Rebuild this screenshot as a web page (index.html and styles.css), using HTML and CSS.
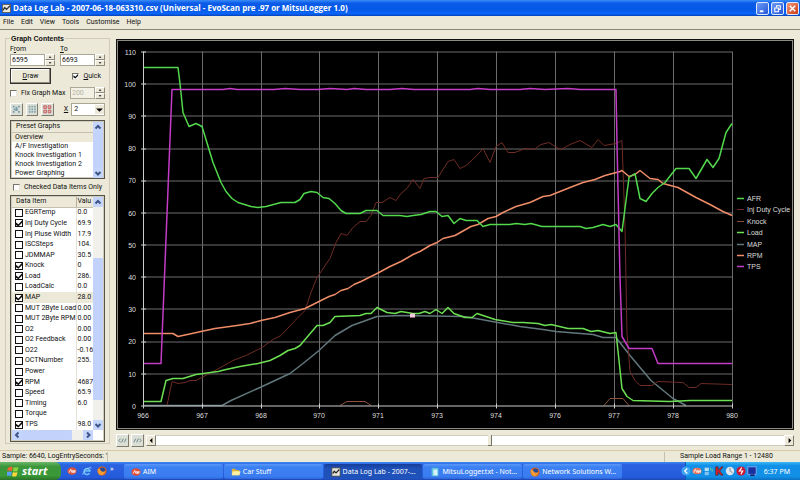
FILE: index.html
```
<!DOCTYPE html>
<html lang="en">
<head>
    <meta charset="UTF-8">
    <meta name="viewport" content="width=device-width, initial-scale=1.0">
    <title>Data Log Lab</title>
    <link rel="stylesheet" href="styles.css">
</head>
<body>
    <header class="titlebar">
        <svg class="app-icon" viewBox="0 0 10 10"><rect width="10" height="10" fill="#555"/><rect x="1" y="1" width="8" height="8" fill="#e8e8e0"/><path d="M1 7l2-3 2 2 4-4" fill="none" stroke="#333" stroke-width="1.4"/></svg>
        <h1>Data Log Lab - 2007-06-18-063310.csv (Universal - EvoScan pre .97 or MitsuLogger 1.0)</h1>
        <div class="window-buttons">
            <button aria-label="Minimize"><svg viewBox="0 0 12 12"><path d="M3 9h4" stroke="#fff" stroke-width="2"/></svg></button>
            <button aria-label="Restore"><svg viewBox="0 0 12 12"><path d="M5 4.500V3h4v4H7.500M3 5.500h4v4H3z" fill="none" stroke="#fff" stroke-width="1.200"/></svg></button>
            <button class="close" aria-label="Close"><svg viewBox="0 0 12 12"><path d="M3 3l6 6M9 3l-6 6" stroke="#fff" stroke-width="1.700"/></svg></button>
        </div>
    </header>

    <nav class="menu">
        <a href="#">File</a>
        <a href="#">Edit</a>
        <a href="#">View</a>
        <a href="#">Tools</a>
        <a href="#">Customise</a>
        <a href="#">Help</a>
    </nav>

    <main>
        <fieldset class="contents">
            <legend>Graph Contents</legend>

            <div class="range-row">
                <div class="field">
                    <label for="from">F<u>r</u>om</label>
                    <div class="spin">
                        <input type="text" id="from" value="6595">
                        <span class="arrows"><button aria-label="Up"></button><button class="down" aria-label="Down"></button></span>
                    </div>
                </div>
                <div class="field">
                    <label for="to"><u>T</u>o</label>
                    <div class="spin">
                        <input type="text" id="to" value="6693">
                        <span class="arrows"><button aria-label="Up"></button><button class="down" aria-label="Down"></button></span>
                    </div>
                </div>
            </div>

            <div class="row draw-row">
                <button class="draw"><u>D</u>raw</button>
                <label class="check"><input type="checkbox" checked><span><u>Q</u>uick</span></label>
            </div>

            <div class="row fix-row">
                <label class="check"><input type="checkbox"><span>Fix Graph Max</span></label>
                <div class="spin small">
                    <input type="text" value="200" aria-label="Graph max" disabled>
                    <span class="arrows"><button aria-label="Up"></button><button class="down" aria-label="Down"></button></span>
                </div>
            </div>

            <div class="row tool-row">
                <button class="tool" aria-label="Check all"><svg viewBox="0 0 12 12"><path d="M2 3h2M8 3h2M2 9h2M8 9h2M3 6h6M6 3v6" stroke="#729cab" stroke-width="2" stroke-dasharray="2 1"/></svg></button>
                <button class="tool" aria-label="Check some"><svg viewBox="0 0 12 12"><path d="M2 3h8M2 6h8M2 9h8" stroke="#83a8ad" stroke-width="2" stroke-dasharray="2 1"/></svg></button>
                <button class="tool" aria-label="Clear all"><svg viewBox="0 0 12 12"><path d="M2 2h3v3H2zM7 2h3v3H7zM2 7h3v3H2zM7 7h3v3H7z" fill="#e5b4ad" stroke="#c2575c"/></svg></button>
                <label for="scale"><u>X</u></label>
                <div class="drop">
                    <select id="scale"><option>1</option><option selected>2</option><option>4</option></select>
                    <svg viewBox="0 0 8 8"><path d="M1 3h6L4 6z"/></svg>
                </div>
            </div>

            <div class="listbox presets">
                <table>
                    <thead><tr><th>Preset Graphs</th></tr></thead>
                    <tbody>
                        <tr class="selected"><td>Overview</td></tr>
                        <tr><td>A/F Investigation</td></tr>
                        <tr><td>Knock Investigation 1</td></tr>
                        <tr><td>Knock Investigation 2</td></tr>
                        <tr><td>Power Graphing</td></tr>
                    </tbody>
                </table>
                <div class="vscroll">
                    <svg viewBox="0 0 10 10"><path d="M2.500 6.500L5 4l2.500 2.500"/></svg>
                    <i class="thumb top"></i>
                    <svg viewBox="0 0 10 10"><path d="M2.500 4L5 6.500 7.500 4"/></svg>
                </div>
            </div>

            <label class="check only"><input type="checkbox"><span>Checked Data Items Only</span></label>

            <div class="listbox items">
                <table>
                    <thead><tr><th>Data Item</th><th>Valu</th></tr></thead>
                    <tbody>
                        <tr><td><label><input type="checkbox">EGRTemp</label></td><td>0.0</td></tr>
                        <tr><td><label><input type="checkbox" checked>Inj Duty Cycle</label></td><td>69.9</td></tr>
                        <tr><td><label><input type="checkbox">Inj Pluse Width</label></td><td>17.9</td></tr>
                        <tr><td><label><input type="checkbox">ISCSteps</label></td><td>104.</td></tr>
                        <tr><td><label><input type="checkbox">JDMMAP</label></td><td>30.5</td></tr>
                        <tr><td><label><input type="checkbox" checked>Knock</label></td><td>0</td></tr>
                        <tr><td><label><input type="checkbox" checked>Load</label></td><td>286.</td></tr>
                        <tr><td><label><input type="checkbox">LoadCalc</label></td><td>0.0</td></tr>
                        <tr class="selected"><td><label><input type="checkbox" checked>MAP</label></td><td>28.0</td></tr>
                        <tr><td><label><input type="checkbox">MUT 2Byte Load</label></td><td>0.00</td></tr>
                        <tr><td><label><input type="checkbox">MUT 2Byte RPM</label></td><td>0.00</td></tr>
                        <tr><td><label><input type="checkbox">O2</label></td><td>0.00</td></tr>
                        <tr><td><label><input type="checkbox">O2 Feedback</label></td><td>0.00</td></tr>
                        <tr><td><label><input type="checkbox">O22</label></td><td>-0.16</td></tr>
                        <tr><td><label><input type="checkbox">OCTNumber</label></td><td>255.</td></tr>
                        <tr><td><label><input type="checkbox">Power</label></td><td></td></tr>
                        <tr><td><label><input type="checkbox" checked>RPM</label></td><td>4687</td></tr>
                        <tr><td><label><input type="checkbox">Speed</label></td><td>65.9</td></tr>
                        <tr><td><label><input type="checkbox">Timing</label></td><td>6.0</td></tr>
                        <tr><td><label><input type="checkbox">Torque</label></td><td></td></tr>
                        <tr><td><label><input type="checkbox" checked>TPS</label></td><td>98.0</td></tr>
                    </tbody>
                </table>
                <div class="vscroll">
                    <svg viewBox="0 0 10 10"><path d="M2.500 6.500L5 4l2.500 2.500"/></svg>
                    <i class="thumb middle"></i>
                    <svg viewBox="0 0 10 10"><path d="M2.500 4L5 6.500 7.500 4"/></svg>
                </div>
                <div class="hscroll">
                    <svg viewBox="0 0 10 10"><path d="M6.500 2.500L4 5l2.500 2.500"/></svg>
                    <i class="thumb"></i>
                    <svg viewBox="0 0 10 10"><path d="M4 2.500L6.500 5 4 7.500"/></svg>
                </div>
            </div>
        </fieldset>

        <section class="graph">
            <div class="chart">
                <svg viewBox="117 40 676 388" role="img" aria-label="Log data graph">
                    <!-- grid -->
                    <path class="grid" d="M143 51.500h589M143 83.500h589M143 115.500h589M143 148.500h589M143 180.500h589M143 212.500h589M143 244.500h589M143 276.500h589M143 308.500h589M143 341.500h589M143 373.500h589M202.500 51v354M261.500 51v354M319.500 51v354M378.500 51v354M437.500 51v354M496.500 51v354M555.500 51v354M614.500 51v354M673.500 51v354M732.500 51v354"/>
                    <!-- series -->
                    <polyline class="knock" points="340,405 347,401 365,401 371,405"/>
                    <polyline class="knock" points="604,405 610,398 623,398 629,405"/>
                    <polyline class="map" points="143,405 222,405 231,400 260,387 290,373 303,363 319,350 335,335 352,325 377,316 400,315 463,316 476,318 520,326 543,329 556,331 593,334 603,337 616,337 630,355 651,380 673,398 686,405"/>
                    <polyline class="duty" points="167,405 172,381 178,383 185,382 190,380 196,380 215,370 233,360 246,355 262,347 273,339 281,335 295,320 305,310 311,292 317,277 330,258 336,242 341,233 347,235 353,227 360,221 366,221 371,215 376,202 382,202 390,197 396,200 401,193 407,188 413,179 420,188 424,178 430,177 438,177 448,161 454,159 460,168 466,165 476,156 483,148 490,162 496,146 502,142 508,152 515,152 525,148 534,149 541,144 549,142 555,146 561,149 570,144 580,140 592,147 598,139 604,145 616,143 622,140 625,226 627,333 630,371 635,380 640,385 652,385 658,381 683,382 689,387 696,387 701,383 732,384"/>
                    <polyline class="rpm" points="143,333 173,333 178,336 192,333 201,331 215,328 237,325 250,323 261,320 275,317 290,312 305,308 319,301 329,296 335,294 341,290 348,288 354,284 361,281 371,276 379,272 390,266 401,261 413,254 420,251 430,245 437,242 443,238 455,235 471,226 478,224 488,218 496,216 503,212 516,206 530,202 543,196 550,195 570,187 583,182 595,179 605,175 620,171 622,170 629,176 635,174 640,170 650,178 658,179 663,183 678,187 696,197 710,204 723,211 732,215"/>
                    <polyline class="afr" points="143,67 178,67 180,83 183,112 189,126 196,123 202,126 213,162 221,182 226,191 232,198 238,202 251,206 258,207 266,206 281,202 295,202 300,199 304,193 311,191 317,192 323,197 329,198 335,203 341,210 346,213 360,213 366,210 377,210 383,215 400,215 407,216 413,215 421,214 430,211 436,211 442,216 448,215 454,223 460,218 466,220 477,220 483,226 490,224 510,224 516,223 525,224 531,223 542,226 580,226 586,228 593,227 603,224 610,226 616,224 622,231 629,177 635,173 640,198 646,201 652,193 658,187 665,182 676,168 689,168 696,178 707,159 713,167 719,158 726,132 732,123"/>
                    <polyline class="load" points="143,401 161,401 166,380 173,378 183,378 196,374 218,371 226,369 240,366 258,363 270,360 280,355 288,350 295,348 300,345 317,325 323,325 330,322 335,316 360,315 366,313 371,313 377,307 387,312 395,313 401,311 413,313 419,313 425,311 430,313 436,309 442,313 448,307 454,313 465,317 472,317 477,313 495,319 513,322 523,322 538,323 545,325 551,324 568,328 583,328 591,331 598,330 610,333 616,332 622,388 627,396 633,400 670,401 690,400 732,400"/>
                    <polyline class="tps" points="143,363 161,363 172,89 223,89 230,88 237,89 262,89 274,89 285,88 300,89 318,89 330,88 347,89 354,88 366,89 390,89 402,88 414,89 470,89 478,88 490,89 520,89 530,88 545,89 568,88 580,89 616,89 617,143 620,277 622,336 629,348 652,348 658,363 732,363"/>
                    <rect x="410" y="313" width="5" height="4" fill="#f4c8dc"/>
                    <!-- axes -->
                    <path class="axis" d="M143.500 51v357M141 405.500h591M141 51.500h5M141 83.500h5M141 115.500h5M141 148.500h5M141 180.500h5M141 212.500h5M141 244.500h5M141 276.500h5M141 308.500h5M141 341.500h5M141 373.500h5M202.500 403v5M261.500 403v5M319.500 403v5M378.500 403v5M437.500 403v5M496.500 403v5M555.500 403v5M614.500 403v5M673.500 403v5M732.500 403v5"/>
                    <g class="ticks-y">
                        <text x="136" y="54">110</text>
                        <text x="136" y="86">100</text>
                        <text x="136" y="118">90</text>
                        <text x="136" y="150">80</text>
                        <text x="136" y="182">70</text>
                        <text x="136" y="215">60</text>
                        <text x="136" y="247">50</text>
                        <text x="136" y="279">40</text>
                        <text x="136" y="311">30</text>
                        <text x="136" y="343">20</text>
                        <text x="136" y="376">10</text>
                        <text x="136" y="408">0</text>
                    </g>
                    <g class="ticks-x">
                        <text x="143" y="417">966</text>
                        <text x="202" y="417">967</text>
                        <text x="261" y="417">968</text>
                        <text x="319" y="417">970</text>
                        <text x="378" y="417">971</text>
                        <text x="437" y="417">973</text>
                        <text x="496" y="417">974</text>
                        <text x="555" y="417">976</text>
                        <text x="614" y="417">977</text>
                        <text x="673" y="417">978</text>
                        <text x="732" y="417">980</text>
                    </g>
                    <!-- legend -->
                    <path class="afr" d="M737 198h7"/>
                    <path class="duty" d="M737 209h7"/>
                    <path class="knock" d="M737 221h7"/>
                    <path class="load" d="M737 232h7"/>
                    <path class="map" d="M737 244h7"/>
                    <path class="rpm" d="M737 255h7"/>
                    <path class="tps" d="M737 266h7"/>
                    <g class="names">
                        <text x="747" y="200">AFR</text>
                        <text x="747" y="211">Inj Duty Cycle</text>
                        <text x="747" y="223">Knock</text>
                        <text x="747" y="234">Load</text>
                        <text x="747" y="246">MAP</text>
                        <text x="747" y="257">RPM</text>
                        <text x="747" y="268">TPS</text>
                    </g>
                </svg>
            </div>
            <div class="scroller">
                <button class="tool" aria-label="Page back"><svg viewBox="0 0 12 12"><path d="M4 4L2 6l2 2M7 4L5 8M10 4L8 8" fill="none" stroke="#628087"/></svg></button>
                <button class="tool" aria-label="Page forward"><svg viewBox="0 0 12 12"><path d="M8 4l2 2-2 2M4 4L2 8M7 4L5 8" fill="none" stroke="#628087"/></svg></button>
                <button class="step first" aria-label="Back"><svg viewBox="0 0 8 8"><path d="M5 1v6L2 4z"/></svg></button>
                <input type="range" min="1" max="12480" value="6640" aria-label="Sample">
                <button class="step" aria-label="Forward"><svg viewBox="0 0 8 8"><path d="M3 1v6l3-3z"/></svg></button>
            </div>
        </section>
    </main>

    <footer class="status">
        <span class="sample">Sample: 6640, LogEntrySeconds: '</span>
        <span class="load-range">Sample Load Range 1 - 12480</span>
    </footer>

    <div class="taskbar">
        <button class="start">
            <svg viewBox="0 0 12 12"><path d="M1 3q2-2 4.500-1L5 6Q3 5 0 6z" fill="#f0632f"/><path d="M6.500 2q2 1 5 0l-1 4q-2 1-4.500 0z" fill="#8cd43c"/><path d="M0 7q2.500-1 4.800 0l-.8 4q-2-1-4.500 0z" fill="#58a0f4"/><path d="M6 7q2 1 4.500 0l-1 4q-2 1-4.500 0z" fill="#fcd83c"/></svg>
            start
        </button>
        <div class="quick">
            <svg viewBox="0 0 12 12"><ellipse cx="6" cy="6" rx="5.500" ry="4.500" fill="#d9523c"/><path d="M2.500 8l2-4 1.500 4M7 8V5l1 3 1.500-3v3" fill="none" stroke="#fff"/></svg>
            <svg viewBox="0 0 12 12"><path d="M9 8.500A3.500 3.500 0 1 1 9.500 6H4" fill="none" stroke="#6cc4fa" stroke-width="1.800"/><path d="M2 10Q0 11 1.500 8 5 2 10 1.500q1.500 0 .5 2" fill="none" stroke="#b8e0ff" stroke-width=".7"/></svg>
            <svg viewBox="0 0 12 12"><circle cx="6" cy="6" r="5.500" fill="#d9601c"/><circle cx="6.500" cy="5" r="3.200" fill="#274b92"/><path d="M1 3q3 0 4 3 2 2 5 0-1 5-5 5-5-1-4-8z" fill="#f69b33"/></svg>
            <span>»</span>
        </div>
        <div class="tasks">
            <button><svg viewBox="0 0 12 12"><ellipse cx="6" cy="6" rx="5.500" ry="4.500" fill="#e04b33"/><path d="M2.500 8l2-4 1.500 4M7 8V5l1 3 1.500-3v3" fill="none" stroke="#fff"/></svg><span>AIM</span></button>
            <button><svg viewBox="0 0 12 12"><path d="M1 2h4l1 1.500h4V10H1z" fill="#d9b13c"/><path d="M2 5h9.500L10 10H1z" fill="#fdf0a0"/></svg><span>Car Stuff</span></button>
            <button class="active"><svg viewBox="0 0 12 12"><rect x="1" y="1" width="10" height="10" fill="#e6e6de" stroke="#444"/><path d="M2 8l2-3 2 2 4-4" fill="none" stroke="#222" stroke-width="1.400"/></svg><span>Data Log Lab - 2007-...</span></button>
            <button><svg viewBox="0 0 12 12"><rect x="2" y="1" width="8" height="10" fill="#5fc4d8"/><path d="M4 3h5v7H4z" fill="#d6f3fa"/></svg><span>MitsuLogger.txt - Not...</span></button>
            <button><svg viewBox="0 0 12 12"><circle cx="6" cy="6" r="5.500" fill="#d9601c"/><circle cx="6.500" cy="5" r="3.200" fill="#274b92"/><path d="M1 3q3 0 4 3 2 2 5 0-1 5-5 5-5-1-4-8z" fill="#f69b33"/></svg><span>Network Solutions W...</span></button>
        </div>
        <div class="tray">
            <svg class="expand" viewBox="0 0 12 12"><circle cx="6" cy="6" r="5.500" fill="#3fa4f4"/><path d="M7.500 3L4.500 6l3 3" fill="none" stroke="#fff" stroke-width="1.500"/></svg>
            <svg viewBox="0 0 12 12"><ellipse cx="6" cy="6" rx="5.500" ry="4" fill="#e3775c"/><path d="M2 8l2-4 2 4M7 8V5l1 3 2-3v3" fill="none" stroke="#fff"/></svg>
            <svg viewBox="0 0 12 12"><rect x="2" y="2" width="5" height="4" fill="#b9dff8"/><rect x="2" y="7" width="5" height="4" fill="#7ec3ef"/><path d="M9 2v3M11 3v4" stroke="#79d18a"/></svg>
            <svg viewBox="0 0 12 12"><path d="M2 1h3v4l4-4h2L7 6l4 5H8L5 7v4H2z" fill="#d9202c" stroke="#222" stroke-width=".6"/></svg>
            <svg viewBox="0 0 12 12"><circle cx="6" cy="6" r="5" fill="#dde6ee"/><path d="M6 2v4l3 2" fill="none" stroke="#6d8294"/></svg>
            <svg viewBox="0 0 12 12"><circle cx="6" cy="6" r="5.500" fill="#cc1631"/><path d="M7 2L4 6h4l-2 4" fill="none" stroke="#fff" stroke-width="1.400"/></svg>
            <svg viewBox="0 0 12 12"><rect x="1" y="1" width="10" height="9" fill="#1c2fa0" stroke="#8db4f4"/><path d="M4 11h5" stroke="#10206c" stroke-width="2"/></svg>
            <time>6:37 PM</time>
        </div>
    </div>
</body>
</html>
```
FILE: styles.css
```
* {
    box-sizing: border-box;
}
body {
    display: flex;
    flex-direction: column;
    height: 100vh;
    margin: 0;
    overflow: hidden;
    background-color: #ece9d8;
    font-family: Roboto, "Liberation Sans", Arial, sans-serif;
    font-size: 7px;
    line-height: 9px;
    color: #111;
}
button, input, select {
    margin: 0;
    padding: 0;
    border: none;
    border-radius: 0;
    font: inherit;
    color: inherit;
}
svg {
    display: block;
}

/* Title bar */
.titlebar {
    display: flex;
    align-items: center;
    flex: none;
    height: 16px;
    padding: 0 1px 0 2px;
    background: linear-gradient(#3a8cf8, #0a5be8 20%, #0558e6 60%, #0a66fa 85%, #0441b8);
}
.app-icon {
    width: 9px;
    height: 9px;
}
.titlebar h1 {
    flex: 1;
    margin: 0 0 0 2px;
    font-family: "Open Sans", sans-serif;
    font-size: 8px;
    font-weight: bold;
    line-height: 14px;
    color: #fff;
    white-space: nowrap;
}
.window-buttons {
    display: flex;
    gap: 2px;
}
.window-buttons button {
    width: 13px;
    height: 13px;
    border: 1px solid #dce8fc;
    border-radius: 2px;
    background: linear-gradient(135deg, #6f9cf6, #2457d8);
}
.window-buttons .close {
    background: linear-gradient(135deg, #f09878, #cc3a14);
}

/* Menu */
.menu {
    display: flex;
    flex: none;
    gap: 7px;
    height: 14px;
    padding: 2px 3px;
    border-bottom: 1px solid #87877a;
}
.menu a {
    color: #111;
    text-decoration: none;
}

main {
    display: flex;
    flex: 1;
    min-height: 0;
    padding: 4px 6px 3px 5px;
}

/* Left panel */
.contents {
    display: flex;
    flex: none;
    flex-direction: column;
    width: 105px;
    min-width: 0;
    margin: 0 6px 3px 0;
    padding: 1px 4px 0;
    border: 1px solid #cfcbb8;
}
.contents legend {
    margin-left: 0;
    padding: 0 1px;
    font-family: "Liberation Sans", Arial, sans-serif;
    font-weight: bold;
}
.range-row {
    display: flex;
    gap: 5px;
}
.row {
    display: flex;
    align-items: center;
    justify-content: space-between;
}
.field {
    flex: 1;
}
.field label {
    display: block;
    line-height: 10px;
}
.spin {
    display: flex;
    height: 12px;
}
.spin input {
    flex: 1;
    width: 0;
    padding-left: 1px;
    border: 1px solid #aaa795;
    background-color: #fff;
}
.spin input:disabled {
    background-color: #f3f1e6;
    color: #b5b2a2;
}
.spin.small {
    width: 35px;
}
.arrows {
    display: flex;
    flex-direction: column;
    width: 10px;
}
.arrows button {
    flex: 1;
    border: 1px solid;
    border-color: #fff #8d8a7c #8d8a7c #fff;
    background-color: #ece9d8;
}
.arrows button::before {
    content: "";
    display: block;
    width: 3px;
    height: 2px;
    margin: auto;
    background-color: #444;
    clip-path: polygon(50% 0, 100% 100%, 0 100%);
}
.arrows .down::before {
    clip-path: polygon(0 0, 100% 0, 50% 100%);
}
.draw-row {
    margin-top: 2px;
    padding-right: 4px;
}
.draw {
    width: 41px;
    height: 16px;
    border: 1px solid #333;
    background-color: #ece9d8;
    box-shadow: inset -1px -1px #8d8a7c, inset 1px 1px #fff;
}
.check {
    display: flex;
    align-items: center;
    gap: 4px;
    white-space: nowrap;
}
.check input, .items input {
    flex: none;
    appearance: none;
    width: 7px;
    height: 7px;
    border: 1px solid;
    border-color: #77746a #e8e5d8 #e8e5d8 #77746a;
    background-color: #fff;
}
.check input:checked::before, .items input:checked::before {
    content: "";
    display: block;
    width: 100%;
    height: 100%;
    background-color: #111;
    clip-path: polygon(0 35%, 40% 65%, 100% 0, 100% 40%, 40% 100%, 0 75%);
}
.fix-row {
    margin-top: 3px;
}
.tool-row {
    gap: 3px;
    margin-top: 4px;
}
.tool {
    width: 13px;
    height: 13px;
    border: 1px solid;
    border-color: #fff #7d7b70 #7d7b70 #fff;
    background-color: #dcdfd5;
}
.tool-row label {
    margin-left: 7px;
}
.drop {
    display: flex;
    position: relative;
    width: 35px;
    height: 13px;
}
.drop select {
    appearance: none;
    width: 100%;
    padding-left: 2px;
    border: 1px solid #aaa795;
    background-color: #fff;
}
.drop svg {
    position: absolute;
    top: 2px;
    right: 1px;
    width: 9px;
    height: 9px;
    background-color: #ece9d8;
    pointer-events: none;
}

/* List boxes */
.listbox {
    display: grid;
    grid-template-columns: 1fr 10px;
    border: 1px solid #555248;
    background-color: #fff;
    box-shadow: inset 0 0 0 1px #cfccbd;
    padding: 1px;
}
.listbox table {
    width: 100%;
    border-collapse: collapse;
    table-layout: fixed;
}
.listbox th {
    height: 10px;
    padding: 0 0 0 4px;
    border-bottom: 1px solid #c5c1ae;
    background-color: #ece9d8;
    font-weight: normal;
    text-align: left;
}
.listbox td {
    padding: 0 0 0 3px;
    white-space: nowrap;
}
.listbox .selected {
    background-color: #ece9d8;
}
.vscroll, .hscroll {
    display: flex;
    background-color: #f1f0ea;
}
.vscroll {
    flex-direction: column;
    min-height: 0;
}
.vscroll svg, .hscroll svg {
    flex: none;
    width: 10px;
    height: 10px;
    background-color: #c6d5fb;
    fill: none;
    stroke: #3d5688;
    stroke-width: 2;
}
.vscroll .top {
    margin-bottom: auto;
    height: 65%;
}
.vscroll .middle {
    margin: auto 0 20px;
    height: 61%;
}
.thumb {
    border-radius: 1px;
    background-color: #c3d2fb;
}
.presets {
    height: 59px;
    margin-top: 4px;
}
.only {
    margin: 4px 0 3px 3px;
}
.items {
    flex: 1;
    grid-template-rows: 1fr 10px;
    min-height: 0;
    margin-bottom: 1px;
}
.items table {
    height: 100%;
}
.items th:last-child {
    width: 17px;
    border-left: 1px solid #b3b09f;
    padding-left: 1px;
}
.items td:last-child {
    padding-left: 1px;
    border-left: 1px solid #e4e2d8;
}
.items label {
    display: flex;
    align-items: center;
    gap: 2px;
}
.items input {
    width: 8px;
    height: 8px;
    border-color: #111;
}
.hscroll .thumb {
    width: 50px;
    margin-right: auto;
}

/* Graph */
.graph {
    display: flex;
    flex: 1;
    flex-direction: column;
    min-width: 0;
    padding-top: 5px;
}
.chart {
    flex: 1;
    min-height: 0;
    border: 1px solid #111;
    outline: 1px solid #8d8b82;
    outline-offset: -2px;
    background-color: #000;
}
.chart svg {
    width: 100%;
    height: 100%;
    font-family: "Liberation Sans", Arial, sans-serif;
    font-size: 7px;
    fill: #ddd;
}
.chart path, .chart polyline {
    fill: none;
    stroke-linejoin: round;
}
.chart .grid {
    stroke: #6c6c6c;
}
.chart .axis {
    stroke: #ccc;
}
.ticks-y {
    text-anchor: end;
}
.ticks-x {
    text-anchor: middle;
}
.afr {
    stroke: #52d84c;
    stroke-width: 1.5;
}
.load {
    stroke: #6ce052;
    stroke-width: 1.5;
}
.duty {
    stroke: #6e2c24;
}
.knock {
    stroke: #8c5138;
}
.map {
    stroke: #62777c;
    stroke-width: 1.5;
}
.rpm {
    stroke: #ee8d68;
    stroke-width: 1.5;
}
.tps {
    stroke: #c43cc8;
    stroke-width: 1.5;
}
.scroller {
    display: flex;
    align-items: center;
    height: 17px;
    padding-top: 3px;
}
.scroller .tool {
    flex: none;
    margin-right: 2px;
}
.step {
    flex: none;
    width: 10px;
    height: 11px;
    padding: 1px 0 0 1px;
    border: 1px solid;
    border-color: #fff #7d7b70 #7d7b70 #fff;
    background-color: #ece9d8;
}
.step svg {
    width: 7px;
    height: 7px;
}
.scroller input {
    appearance: none;
    flex: 1;
    min-width: 0;
    height: 11px;
    border: 1px solid #cfccbd;
    border-width: 1px 0;
    background-color: #fff;
}
.scroller input::-webkit-slider-thumb {
    appearance: none;
    width: 4px;
    height: 11px;
    border-right: 1px solid #77746a;
    border-bottom: 1px solid #77746a;
    background-color: #ece9d8;
}

/* Status bar */
.status {
    display: flex;
    flex: none;
    justify-content: space-between;
    height: 12px;
    padding: 1px 12px 0 2px;
    border-top: 1px solid #d6c9a4;
}
.sample {
    min-width: 104px;
    border-right: 1px solid #c5c1ae;
    white-space: nowrap;
}
.load-range {
    width: 124px;
    border-left: 1px solid #c5c1ae;
    text-align: center;
}

/* Taskbar */
.taskbar {
    display: flex;
    flex: none;
    height: 18px;
    background: linear-gradient(#3f8af2, #2a63e0 15%, #245bdc 85%, #1c46b0);
    font-family: "Noto Sans", sans-serif;
    color: #fff;
}
.taskbar svg {
    flex: none;
    width: 10px;
    height: 10px;
}
.start {
    display: flex;
    align-items: center;
    gap: 3px;
    width: 61px;
    padding-left: 7px;
    border-radius: 0 6px 6px 0;
    background: linear-gradient(#6cb86a, #3c963a 25%, #3a9a38 75%, #2a7228);
    font-family: "Open Sans", sans-serif;
    font-size: 11px;
    font-style: italic;
    font-weight: bold;
    line-height: 16px;
}
.start svg {
    width: 12px;
    height: 12px;
}
.quick {
    display: flex;
    align-items: center;
    gap: 5px;
    width: 63px;
    padding-left: 6px;
}
.quick span {
    margin-left: -2px;
    line-height: 14px;
    align-self: flex-start;
}
.tasks {
    display: flex;
    flex: 1;
    gap: 1px;
    padding: 2px 63px 1px 0;
}
.tasks button {
    display: flex;
    align-items: center;
    flex: 1;
    gap: 2px;
    min-width: 0;
    padding-left: 7px;
    border-radius: 2px;
    background: linear-gradient(#5b97f8, #3c81f3 20%, #3a7cf0 85%, #2c64d8);
    white-space: nowrap;
}
.tasks .active {
    background: linear-gradient(#163c98, #1e50b8 30%, #1f52ba);
}
.tray {
    display: flex;
    align-items: center;
    gap: 1px;
    width: 115px;
    border-left: 1px solid #1058b8;
    background: linear-gradient(#3cb8f8, #1290e8 20%, #1290e8 80%, #0c70c0);
}
.tray .expand {
    margin-left: -5px;
}
.tray time {
    margin: 0 10px 0 auto;
}
```
